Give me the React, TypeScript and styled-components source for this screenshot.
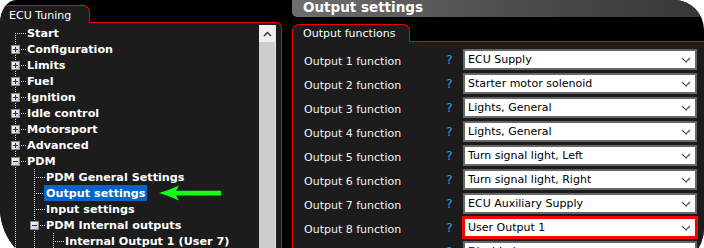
import styled, { createGlobalStyle } from "styled-components";

const RED = "#ee0000";
const PANEL = "#1c1c1c";

const GlobalStyle = createGlobalStyle`
  html, body {
    margin: 0;
    padding: 0;
    background: #fff;
    overflow: hidden;
  }
  body {
    font-family: "DejaVu Sans", Verdana, sans-serif;
  }
`;

// Outer torn-screenshot frame
const Frame = styled.div`
  width: 704px;
  height: 268px;
  background: #000;
  border-radius: 16px 30px 40px 60px / 24px 30px 40px 60px;
  overflow: hidden;
  display: flex;
  gap: 10px;
  font-family: "DejaVu Sans", Verdana, sans-serif;
`;

const LeftPane = styled.div`
  width: 282px;
  flex-shrink: 0;
  display: flex;
  flex-direction: column;
  padding-top: 5px;
  box-sizing: border-box;
`;

const RightPane = styled.div`
  flex: 1;
  min-width: 0;
  display: flex;
  flex-direction: column;
`;

const PaneTab = styled.div<{ $width: number; $pad: number; $left?: boolean; $textTop?: number }>`
  position: relative;
  z-index: 1;
  box-sizing: border-box;
  width: ${(p) => p.$width}px;
  height: 18px;
  margin-bottom: -1px;
  padding-left: ${(p) => p.$pad}px;
  padding-top: ${(p) => p.$textTop ?? 0}px;
  background: ${PANEL};
  border-top: 1px solid ${RED};
  border-right: 1px solid ${RED};
  border-left: ${(p) => (p.$left ? `1px solid ${RED}` : "none")};
  border-radius: ${(p) => (p.$left ? "7px 7px 0 0" : "0 7px 0 0")};
  color: #fff;
  font-size: 11px;
  line-height: 16px;
  white-space: nowrap;
`;

const TreeBody = styled.div`
  flex: 1;
  display: flex;
  background: ${PANEL};
  border-top: 1px solid ${RED};
  border-right: 1px solid ${RED};
  border-top-right-radius: 6px;
  padding-top: 2px;
`;

const Tree = styled.div`
  flex: 1;
  padding-left: 5px;
  display: flex;
  flex-direction: column;
`;

const TreeRow = styled.div`
  display: flex;
  align-items: flex-start;
  height: 16px;
  white-space: nowrap;
`;

const NodeLabel = styled.span<{ $selected?: boolean }>`
  display: inline-block;
  height: 16px;
  font-weight: bold;
  font-size: 11.2px;
  line-height: 18px;
  color: #fff;
  padding: 0 2px;
  margin-left: -1px;
  background: ${(p) => (p.$selected ? "#0a64c8" : "transparent")};
`;

const Cell = styled.svg`
  display: block;
  flex-shrink: 0;
`;

const ScrollBar = styled.div`
  width: 16px;
  border-right: 1px solid #e6e6e6;
  margin-right: 5px;
  background: #cdcdcd;
  display: flex;
  flex-direction: column;
`;

const ScrollButton = styled.div`
  height: 17px;
  background: #f0f0f0;
  display: flex;
  align-items: center;
  justify-content: center;
`;

const TitleBar = styled.div`
  height: 17px;
  box-sizing: border-box;
  padding-left: 11px;
  background: linear-gradient(to right, #6e6e6e 0%, #4c4c4c 55%, #373737 100%);
  border-bottom-left-radius: 5px;
  color: #fff;
  font-weight: bold;
  font-size: 13.5px;
  line-height: 14px;
  white-space: nowrap;
`;

const TabRow = styled.div`
  display: flex;
  padding-top: 7px;
`;

const FormBody = styled.div`
  flex: 1;
  background: ${PANEL};
  border-top: 1px solid ${RED};
  border-left: 1px solid ${RED};
  padding: 7px 0 0 11px;
  display: flex;
  flex-direction: column;
  gap: 3px;
`;

const FieldRow = styled.div`
  display: grid;
  grid-template-columns: 142px 17px 234px;
  align-items: center;
  height: 21px;
`;

const FieldLabel = styled.span`
  color: #f2f2f2;
  font-size: 11px;
  padding-top: 3px;
  white-space: nowrap;
`;

const Help = styled.span`
  color: #1e9fe6;
  font-size: 12.5px;
`;

const Select = styled.div<{ $flagged?: boolean }>`
  box-sizing: border-box;
  height: 21px;
  border: 2px solid ${(p) => (p.$flagged ? "#ff0000" : "#676767")};
  box-shadow: ${(p) => (p.$flagged ? "0 0 0 1px #ff0000" : "none")};
  background: #fff;
  display: flex;
  align-items: center;
  justify-content: space-between;
  padding: 0 4px 0 3px;
  font-size: 11px;
  color: #000;
  white-space: nowrap;
`;

type Node = {
  level: number;
  label: string;
  box?: "plus" | "minus";
  first?: boolean;
  selected?: boolean;
};

const nodes: Node[] = [
  { level: 0, label: "Start", first: true },
  { level: 0, label: "Configuration", box: "plus" },
  { level: 0, label: "Limits", box: "plus" },
  { level: 0, label: "Fuel", box: "plus" },
  { level: 0, label: "Ignition", box: "plus" },
  { level: 0, label: "Idle control", box: "plus" },
  { level: 0, label: "Motorsport", box: "plus" },
  { level: 0, label: "Advanced", box: "plus" },
  { level: 0, label: "PDM", box: "minus" },
  { level: 1, label: "PDM General Settings" },
  { level: 1, label: "Output settings", selected: true },
  { level: 1, label: "Input settings" },
  { level: 1, label: "PDM Internal outputs", box: "minus" },
  { level: 2, label: "Internal Output 1 (User 7)" },
];

const outputs = [
  "ECU Supply",
  "Starter motor solenoid",
  "Lights, General",
  "Lights, General",
  "Turn signal light, Left",
  "Turn signal light, Right",
  "ECU Auxiliary Supply",
  "User Output 1",
  "Disabled",
];

const DOT = "#dadada";

const Guide = () => (
  <Cell width={19} height={16}>
    <line x1={10.5} y1={0} x2={10.5} y2={16} stroke={DOT} strokeDasharray="1 1" />
  </Cell>
);

const Branch = ({ box, first }: { box?: "plus" | "minus"; first?: boolean }) => (
  <Cell width={21} height={16}>
    <defs>
      <linearGradient id="boxfill" x1="0" y1="0" x2="1" y2="1">
        <stop offset="0" stopColor="#ffffff" />
        <stop offset="1" stopColor="#c4c4c4" />
      </linearGradient>
    </defs>
    <line x1={10.5} y1={first ? 8 : 0} x2={10.5} y2={16} stroke={DOT} strokeDasharray="1 1" />
    <line x1={box ? 16 : 10} y1={8.5} x2={21} y2={8.5} stroke={DOT} strokeDasharray="1 1" />
    {box && (
      <g>
        <rect x={6.5} y={4.5} width={8} height={8} fill="url(#boxfill)" stroke="#8a8a8a" />
        <line x1={8} y1={8.5} x2={13} y2={8.5} stroke="#1d2f6e" />
        {box === "plus" && <line x1={10.5} y1={6} x2={10.5} y2={11} stroke="#1d2f6e" />}
      </g>
    )}
  </Cell>
);

const GreenArrow = () => (
  <Cell width={62} height={16} style={{ marginLeft: 12 }}>
    <path d="M0,8 Q10,5.5 20,0.6 L17,5.8 L62,5.8 L62,10.4 L17,10.4 L20,15.6 Q10,10.8 0,8 Z" fill="#14ff14" />
  </Cell>
);

const Chevron = ({ up }: { up?: boolean }) =>
  up ? (
    <svg width={9} height={6}>
      <polyline points="1,5 4.5,1.5 8,5" fill="none" stroke="#3c3c3c" strokeWidth={1.5} />
    </svg>
  ) : (
    <svg width={10} height={6}>
      <polyline points="1,1 5,5 9,1" fill="none" stroke="#555" strokeWidth={1.2} />
    </svg>
  );

const App = () => {
  return (
    <Frame>
      <GlobalStyle />
      <LeftPane>
        <PaneTab $width={90} $pad={9} $textTop={2}>
          ECU Tuning
        </PaneTab>
        <TreeBody>
          <Tree>
            {nodes.map((n, i) => (
              <TreeRow key={i}>
                {Array.from({ length: n.level }).map((_, g) => (
                  <Guide key={g} />
                ))}
                <Branch box={n.box} first={n.first} />
                <NodeLabel $selected={n.selected}>{n.label}</NodeLabel>
                {n.selected && <GreenArrow />}
              </TreeRow>
            ))}
          </Tree>
          <ScrollBar>
            <ScrollButton>
              <Chevron up />
            </ScrollButton>
          </ScrollBar>
        </TreeBody>
      </LeftPane>
      <RightPane>
        <TitleBar>Output settings</TitleBar>
        <TabRow>
          <PaneTab $width={118} $pad={10} $left $textTop={1}>
            Output functions
          </PaneTab>
        </TabRow>
        <FormBody>
          {outputs.map((value, i) => (
            <FieldRow key={i}>
              <FieldLabel>Output {i + 1} function</FieldLabel>
              <Help>?</Help>
              <Select $flagged={i === 7}>
                <span>{value}</span>
                <Chevron />
              </Select>
            </FieldRow>
          ))}
        </FormBody>
      </RightPane>
    </Frame>
  );
};

export default App;
